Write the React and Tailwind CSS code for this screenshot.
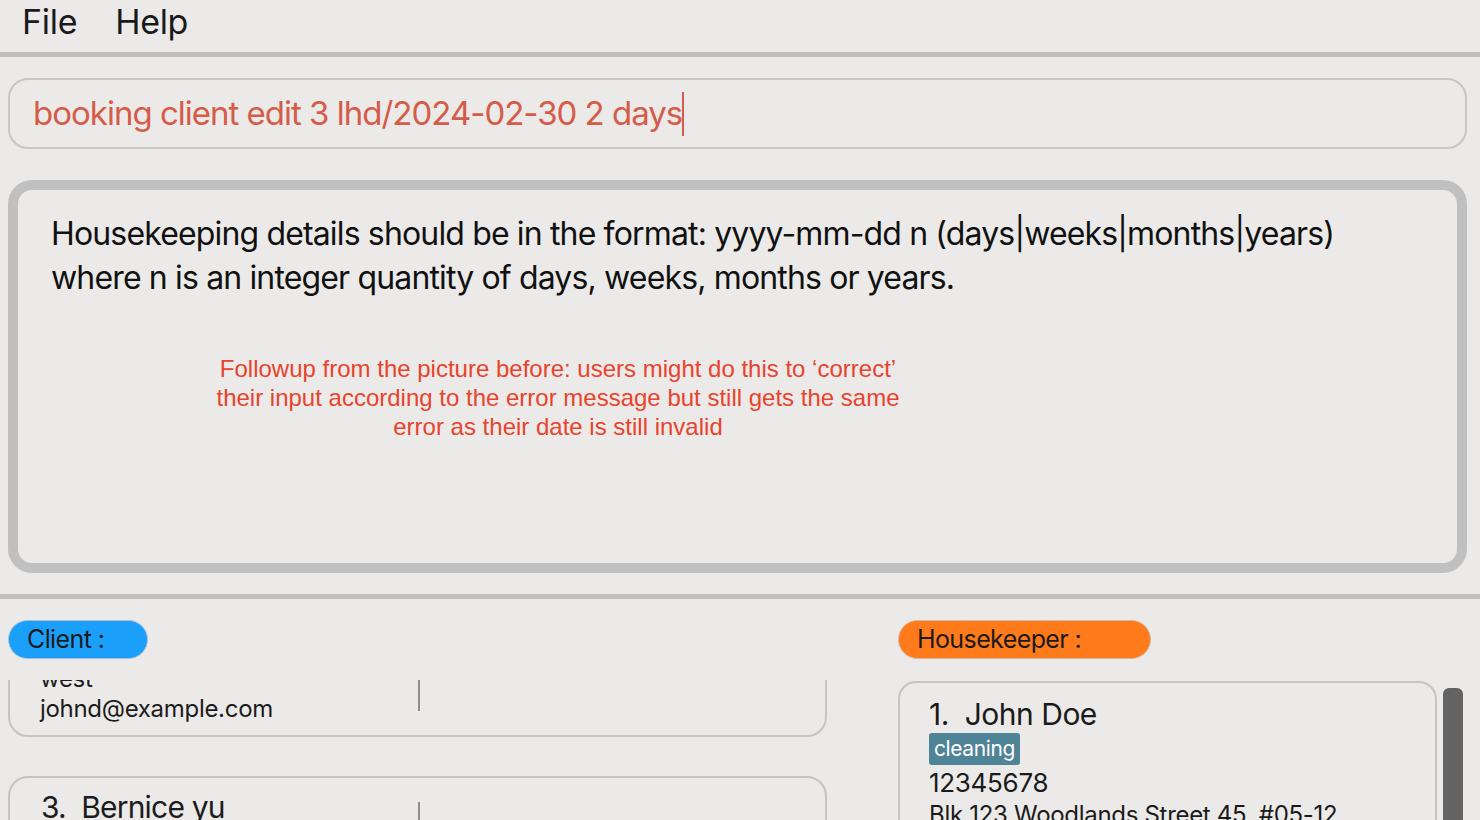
import React from 'react';

const sf = { fontFamily: 'Inter, "Noto Sans", sans-serif' };

const ClientCard = ({ lines, offset = 0 }) => (
  <div className="flex border-2 border-[#c4c4c4] rounded-[20px] bg-[#ebeae8]" style={{ marginTop: offset }}>
    <div className="w-[408px] pl-[30px] pt-[9px] pb-[11px] text-[#1c1c1c]">
      {lines}
    </div>
    <div className="w-[2px] bg-[#8f8f8f] my-[24px]" />
  </div>
);

export default function App() {
  return (
    <div className="w-[1480px] h-[820px] overflow-hidden bg-[#ebeae8] text-[#1a1a1a]" style={sf}>
      {/* Menu bar */}
      <div className="h-[57px] border-b-[5px] border-[#bfbfbf] flex items-center gap-[38px] pl-[22px] pb-[10px] text-[34px] tracking-[-0.3px]">
        <span>File</span>
        <span>Help</span>
      </div>

      {/* Command box */}
      <div className="px-[8px] pt-[21px]">
        <div className="h-[71px] border-2 border-[#c6c6c6] rounded-[20px] flex items-center pl-[23px] mr-[5px]">
          <span className="text-[33px] text-[#d45c48] tracking-[-1px]">booking client edit 3 lhd/2024-02-30 2 days</span>
          <span className="w-[2px] h-[44px] bg-[#d45c48]" />
        </div>
      </div>

      {/* Result display */}
      <div className="px-[8px] pt-[31px]">
        <div className="relative h-[393px] mr-[5px] border-[10px] border-[#c0c0c0] rounded-[24px] pl-[33px] pt-[22px]">
          <p className="text-[32px] leading-[44px] tracking-[-0.85px] text-[#111]">
            Housekeeping details should be in the format: yyyy-mm-dd n (days|weeks|months|years)
            <br />
            where n is an integer quantity of days, weeks, months or years.
          </p>
          <div
            className="absolute left-[140px] top-[164px] w-[800px] text-center text-[24px] leading-[29px] text-[#e8432d]"
            style={{ fontFamily: '"Liberation Sans", Arial, sans-serif' }}
          >
            Followup from the picture before: users might do this to ‘correct’
            <br />
            their input according to the error message but still gets the same
            <br />
            error as their date is still invalid
          </div>
        </div>
      </div>

      {/* Lists */}
      <div className="mt-[21px] border-t-[5px] border-[#bfbfbf] flex pt-[21px]">
        {/* Clients */}
        <div className="w-[819px] ml-[8px] flex flex-col">
          <div className="w-[140px] h-[39px] rounded-full bg-[#1a9ffa] border border-[#a9c0d2] flex items-center pl-[18px] text-[25px] tracking-[-0.6px]">
            Client :
          </div>
          <div className="mt-[21px] h-[200px] overflow-hidden">
            {/* list is scrolled: top of this card sits above the viewport */}
            <ClientCard
              offset={-27}
              lines={
                <div className="text-[24px] leading-[30px] tracking-[-0.3px]">
                  <div>west</div>
                  <div>johnd@example.com</div>
                </div>
              }
            />
            <div className="h-[39px]" />
            <ClientCard
              lines={
                <div>
                  <div className="text-[30px] leading-[40px] tracking-[-0.8px] pl-[1px]">3.&nbsp;&nbsp;Bernice yu</div>
                  <div className="text-[24px] leading-[30px]">99272758</div>
                </div>
              }
            />
          </div>
        </div>

        {/* Housekeepers */}
        <div className="ml-[71px] flex-1 flex flex-col">
          <div className="w-[253px] h-[39px] rounded-full bg-[#ff7a1a] border border-[#d8b89e] flex items-center pl-[18px] text-[25px] tracking-[-0.6px]">
            Housekeeper :
          </div>
          <div className="mt-[22px] flex gap-[6px]">
            <div className="w-[539px] h-[200px] border-2 border-[#c4c4c4] rounded-[18px] pl-[29px] pt-[11px]">
              <div className="text-[30px] leading-[40px] tracking-[-0.5px]">1.&nbsp;&nbsp;John Doe</div>
              <div className="mt-[-1px] inline-block bg-[#4f8396] text-white text-[21px] leading-[32px] px-[5px] rounded-[3px] tracking-[-0.4px]">
                cleaning
              </div>
              <div className="text-[26px] leading-[34px] mt-[1px] tracking-[-0.3px]">12345678</div>
              <div className="text-[24px] leading-[30px] tracking-[-0.3px]">Blk 123 Woodlands Street 45, #05-12</div>
            </div>
            <div className="w-[20px] h-[200px] mt-[7px] rounded-[6px] bg-[#636363]" />
          </div>
        </div>
      </div>
    </div>
  );
}
